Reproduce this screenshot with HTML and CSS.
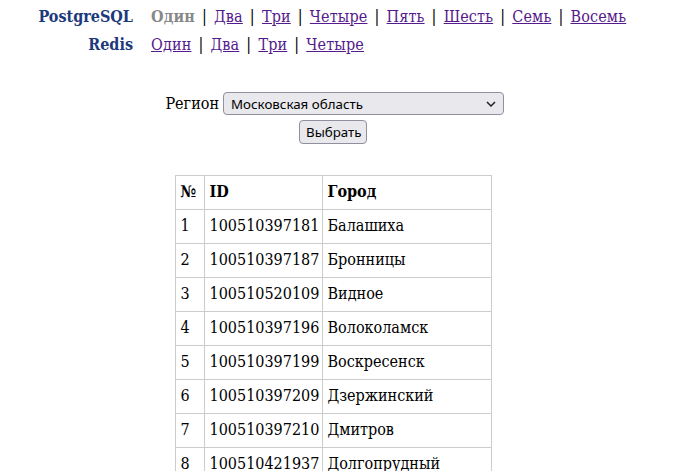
FILE: index.html
```html
<!DOCTYPE html>
<html lang="ru">
<head>
<meta charset="utf-8">
<title>Города</title>
<link rel="stylesheet" href="styles.css">
</head>
<body>
<div class="page">
<div class="nav">
  <div class="nav-title">PostgreSQL</div>
  <div class="nav-links"><span class="current">Один</span> | <a href="#">Два</a> | <a href="#">Три</a> | <a href="#">Четыре</a> | <a href="#">Пять</a> | <a href="#">Шесть</a> | <a href="#">Семь</a> | <a href="#">Восемь</a></div>
  <div class="nav-title">Redis</div>
  <div class="nav-links"><a href="#">Один</a> | <a href="#">Два</a> | <a href="#">Три</a> | <a href="#">Четыре</a></div>
</div>
<form class="region-form">
  <div class="region-row">
    <label for="region" class="region-label">Регион</label>
    <div class="select-wrap">
      <select id="region" class="region-select">
        <option>Московская область</option>
      </select>
      <svg class="chevron" width="10" height="6" viewBox="0 0 10 6"><path d="M1 1 L5 5 L9 1" fill="none" stroke="#222" stroke-width="1.5"/></svg>
    </div>
  </div>
  <button type="button" class="region-btn">Выбрать</button>
</form>
<table class="cities">
  <colgroup><col class="c-num"><col class="c-id"><col class="c-city"></colgroup>
  <thead>
    <tr><th>№</th><th>ID</th><th>Город</th></tr>
  </thead>
  <tbody>
    <tr><td>1</td><td>100510397181</td><td>Балашиха</td></tr>
    <tr><td>2</td><td>100510397187</td><td>Бронницы</td></tr>
    <tr><td>3</td><td>100510520109</td><td>Видное</td></tr>
    <tr><td>4</td><td>100510397196</td><td>Волоколамск</td></tr>
    <tr><td>5</td><td>100510397199</td><td>Воскресенск</td></tr>
    <tr><td>6</td><td>100510397209</td><td>Дзержинский</td></tr>
    <tr><td>7</td><td>100510397210</td><td>Дмитров</td></tr>
    <tr><td>8</td><td>100510421937</td><td>Долгопрудный</td></tr>
  </tbody>
</table>
</div>
</body>
</html>
```
FILE: styles.css
```css
body {
  margin: 0;
  font-family: "DejaVu Serif Condensed", "DejaVu Serif", serif;
  font-stretch: condensed;
  font-size: 16px;
  line-height: 22px;
  color: #000;
}
.page {
  padding: 6px 28px 0 8px;
}
.nav {
  display: grid;
  grid-template-columns: 125px auto;
  column-gap: 18px;
  row-gap: 6px;
  justify-content: start;
}
.nav-title {
  text-align: right;
  font-weight: bold;
  color: #1c3a7c;
}
.nav-links {
  word-spacing: 2.3px;
  letter-spacing: 0.15px;
}
.nav-links a {
  color: #551a8b;
}
.current {
  color: #888;
  font-weight: bold;
}
.region-form {
  margin-top: 36px;
  display: flex;
  flex-direction: column;
  align-items: center;
  gap: 5px;
}
.region-row {
  display: flex;
  align-items: center;
  gap: 4px;
}
.region-label {
  width: 57px;
  text-align: right;
  white-space: nowrap;
}
.select-wrap {
  position: relative;
  display: flex;
}
.region-select {
  appearance: none;
  -webkit-appearance: none;
  width: 281px;
  height: 23px;
  margin: 0;
  padding: 0 20px 0 7px;
  background: #e9e9ed;
  border: 1px solid #8f8f9d;
  border-radius: 4px;
  font-family: "Noto Sans", sans-serif;
  font-size: 13.33px;
  color: #000;
}
.chevron {
  position: absolute;
  right: 8px;
  top: 9px;
  pointer-events: none;
}
.region-btn {
  width: 68px;
  height: 24px;
  margin: 0;
  padding: 0 6px;
  background: #e9e9ed;
  border: 1px solid #8f8f9d;
  border-radius: 4px;
  font-family: "Noto Sans", sans-serif;
  font-size: 13.33px;
  color: #000;
}
.cities {
  border-collapse: collapse;
  table-layout: fixed;
  margin: 31px auto 0;
  width: 316px;
}
.c-num { width: 29px; }
.c-id { width: 118px; }
.c-city { width: 169px; }
.cities th, .cities td {
  border: 1px solid #ccc;
  padding: 5px 5px 6px;
  text-align: left;
  white-space: nowrap;
}
```
